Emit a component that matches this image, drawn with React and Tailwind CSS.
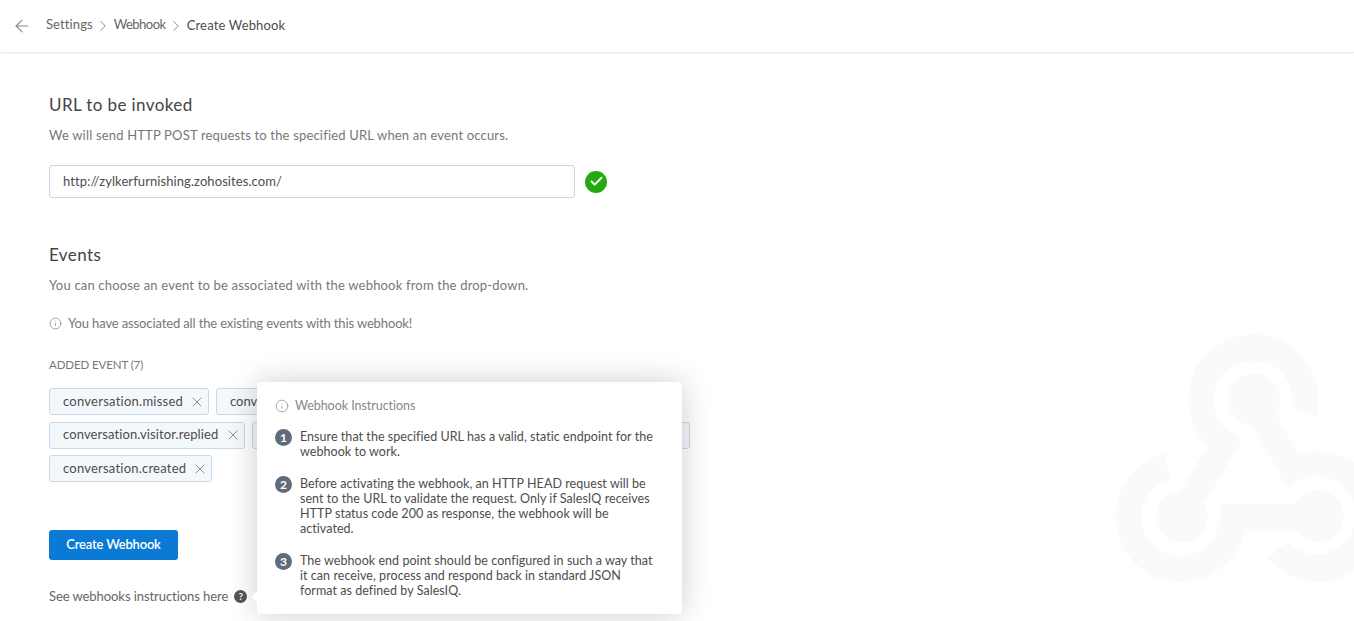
import React from "react";
import { ArrowLeft, ChevronRight, Info, X, Check } from "lucide-react";

function Chip({ label, cls = "", textCls = "" }) {
  return (
    <div className={`h-[27px] flex items-center justify-between pl-[13px] pr-[3px] rounded-[3px] border border-[#c9d8e6] bg-[#f3f8fc] text-[13px] text-[#4d4d4d] whitespace-nowrap ${cls}`}>
      <span className={textCls}>{label}</span>
      {label && <X size={16} strokeWidth={1.4} className="ml-[5px] text-[#888]" />}
    </div>
  );
}

function Step({ n, children }) {
  return (
    <div className="flex gap-[8px]">
      <div className="w-[17px] h-[17px] shrink-0 rounded-full bg-[#5f6b7a] text-white text-[12px] font-bold flex items-center justify-center">{n}</div>
      <p className="text-[12.5px] leading-[15px] tracking-[0.05px] text-[#4d4d4d]">{children}</p>
    </div>
  );
}

export default function App() {
  return (
    <div className="relative h-screen w-full overflow-hidden bg-white font-['Lato']">
      <header className="h-[53px] flex items-center border-b border-[#eeeeee] shadow-[0_1px_2px_rgba(0,0,0,0.04)] pl-[12px] text-[13px] text-[#666]">
        <ArrowLeft size={20} strokeWidth={1.4} className="text-[#888]" />
        <span className="ml-[14px] -translate-y-px tracking-[0.1px]">Settings</span>
        <ChevronRight size={18} strokeWidth={1.3} className="mx-[1.5px] text-[#888]" />
        <span className="-translate-y-px tracking-[-0.5px]">Webhook</span>
        <ChevronRight size={18} strokeWidth={1.3} className="mx-[1.5px] text-[#888]" />
        <span className="text-[#4d4d4d] tracking-[0.15px]">Create Webhook</span>
        <X size={11} strokeWidth={1.5} className="ml-auto -mr-[9px] text-[#777]" />
      </header>

      <main className="pl-[49px]">
        <h2 className="mt-[41px] text-[17px] leading-[22px] text-[#444] tracking-[0.4px]">URL to be invoked</h2>
        <p className="mt-[10px] text-[13px] leading-[18px] text-[#777] tracking-[0.18px]">We will send HTTP POST requests to the specified URL when an event occurs.</p>
        <div className="mt-[21px] flex items-center gap-[10px]">
          <div className="w-[526px] h-[33px] flex items-center pl-[13px] rounded-[3px] border border-[#d5d5d5] text-[13px] tracking-[0.08px] text-[#4d4d4d]">http://zylkerfurnishing.zohosites.com/</div>
          <div className="w-[22px] h-[22px] rounded-full bg-[#26a812] flex items-center justify-center">
            <Check size={15} strokeWidth={3} className="text-white" />
          </div>
        </div>

        <h2 className="mt-[46px] text-[17px] leading-[22px] text-[#444] tracking-[0.4px]">Events</h2>
        <p className="mt-[10px] text-[13px] leading-[18px] text-[#777] tracking-[0.185px]">You can choose an event to be associated with the webhook from the drop-down.</p>
        <div className="mt-[20px] flex items-center gap-[6px] text-[13px] leading-[18px] text-[#777]">
          <Info size={13} strokeWidth={1.2} />
          <span className="tracking-[-0.13px]">You have associated all the existing events with this webhook!</span>
        </div>
        <p className="mt-[24px] text-[11.5px] leading-[18px] text-[#777] tracking-[-0.1px]">ADDED EVENT (7)</p>

        <div className="mt-[14px] w-[645px] flex flex-wrap gap-x-[7px] gap-y-[6.5px]">
          <Chip label="conversation.missed" cls="w-[160px]" textCls="tracking-[0.25px]" />
          <Chip label="conv" cls="w-[170px]" />
          <Chip label="" cls="w-[170px]" />
          <Chip label="conversation.visitor.replied" cls="w-[196px]" textCls="tracking-[0.1px]" />
          <Chip label="" cls="w-[190px]" />
          <Chip label="" cls="w-[241px]" />
          <Chip label="conversation.created" cls="w-[163px]" textCls="tracking-[0.22px]" />
        </div>

        <button className="mt-[48px] w-[129px] h-[30px] rounded-[3px] bg-[#0a7ad4] text-white text-[13px] font-semibold tracking-[-0.2px] block">Create Webhook</button>

        <div className="mt-[27px] flex items-center gap-[6px] text-[13px] text-[#666]">
          <span className="tracking-[-0.07px]">See webhooks instructions here</span>
          <div className="w-[13px] h-[13px] rounded-full bg-[#555] text-white text-[10px] font-bold flex items-center justify-center">?</div>
        </div>
      </main>

      <svg className="absolute right-0 bottom-0 w-[254px] h-[301px]" viewBox="0 0 762 903" fill="#fafafa">
        <path d="M650 287A196 196 0 1 0 322 378L242 512A78 78 0 1 0 312 550L428 358L398 341A118 118 0 1 1 574 266Z" />
        <path d="M527 280L596 403A196 196 0 1 1 502 713L562 666A118 118 0 1 0 562 505L457 316A78 78 0 1 1 527 280Z" />
        <path d="M192 400A196 196 0 1 0 434 628L586 628A78 78 0 1 0 586 550L360 550L360 590A118 118 0 1 1 212 476Z" />
      </svg>

      <aside className="absolute left-[257px] top-[382px] w-[425px] h-[232px] bg-white rounded-[3px] shadow-[0_0_30px_rgba(0,0,0,0.2)] pl-[18px] pr-[24px] pt-[15px]">
        <div className="absolute -left-[4px] top-[211px] w-[8px] h-[8px] rotate-45 bg-white" />
        <div className="flex items-center gap-[6px] text-[12.5px] leading-[18px] tracking-[-0.05px] text-[#888]">
          <Info size={14} strokeWidth={1.2} />
          <span>Webhook Instructions</span>
        </div>
        <div className="mt-[14px] flex flex-col gap-[17px]">
          <Step n="1">Ensure that the specified URL has a valid, static endpoint for the webhook to work.</Step>
          <Step n="2">Before activating the webhook, an HTTP HEAD request will be sent to the URL to validate the request. Only if SalesIQ receives HTTP status code 200 as response, the webhook will be activated.</Step>
          <Step n="3">The webhook end point should be configured in such a way that it can receive, process and respond back in standard JSON format as defined by SalesIQ.</Step>
        </div>
      </aside>
    </div>
  );
}
